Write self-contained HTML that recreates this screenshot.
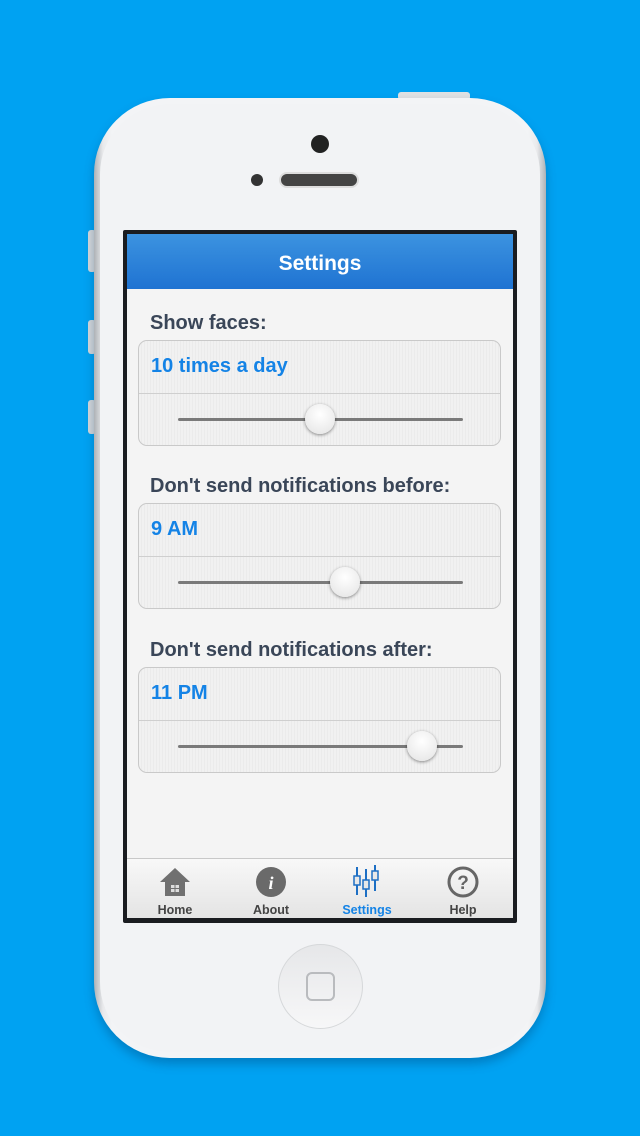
<!DOCTYPE html>
<html><head><style>
*{margin:0;padding:0;box-sizing:border-box}
body{width:640px;height:1136px;background:#00a2f2;position:relative;overflow:hidden;font-family:"Liberation Sans",Arial,sans-serif}
.abs{position:absolute}
.phone{left:94px;top:98px;width:452px;height:960px;border-radius:76px;background:linear-gradient(90deg,#aeb2b6,#e9eaec 2%,#f3f4f6 4%,#f3f4f6 96%,#e9eaec 98%,#aeb2b6);box-shadow:0 6px 10px rgba(0,60,110,.35)}
.inner{left:100px;top:104px;width:440px;height:948px;border-radius:70px;background:#f2f3f5}
.screen{left:123px;top:230px;width:394px;height:693px;background:#1a1c20;border-radius:2px}
.nav{left:127px;top:234px;width:386px;height:55px;background:linear-gradient(180deg,#3c93e0,#1f73d2);color:#fff;font-weight:bold;font-size:21px;text-align:center;line-height:60px}
.content{left:127px;top:289px;width:386px;height:569px;background:#f4f4f4}
.lbl{left:150px;font-size:20px;font-weight:bold;color:#3a4658}
.box{left:138px;width:363px;height:106px;border:1px solid #c9c9c9;border-radius:9px;background:repeating-linear-gradient(90deg,#f1f1f1 0 2px,#ebebeb 2px 3px)}
.box .div{position:absolute;left:0;right:0;top:52px;border-top:1px solid #cfcfcf}
.box .val{position:absolute;left:12px;top:14px;font-size:20px;font-weight:bold;color:#1483e6}
.box .trk{position:absolute;left:39px;width:285px;top:77px;height:3px;background:#7a7a7a;border-radius:2px}
.box .th{position:absolute;top:63px;width:30px;height:30px;border-radius:50%;background:radial-gradient(circle at 50% 35%,#fff,#e3e3e3);box-shadow:0 1px 3px rgba(0,0,0,.45)}
.tab{left:127px;top:858px;width:386px;height:60px;background:linear-gradient(180deg,#f8f8f8,#e4e4e4);border-top:1px solid #c8c8c8}
.t{position:absolute;top:44px;width:96px;text-align:center;font-size:12.5px;font-weight:bold;color:#444}
</style></head><body>
<div class="abs" style="left:398px;top:92px;width:72px;height:8px;background:#dfe1e3;border-radius:3px"></div>
<div class="abs" style="left:88px;top:230px;width:8px;height:42px;background:#d6d8da;border-radius:3px"></div>
<div class="abs" style="left:88px;top:320px;width:8px;height:34px;background:#d6d8da;border-radius:3px"></div>
<div class="abs" style="left:88px;top:400px;width:8px;height:34px;background:#d6d8da;border-radius:3px"></div>
<div class="abs phone"></div>
<div class="abs inner"></div>
<div class="abs" style="left:311px;top:135px;width:18px;height:18px;border-radius:50%;background:#222"></div>
<div class="abs" style="left:251px;top:174px;width:12px;height:12px;border-radius:50%;background:#333"></div>
<div class="abs" style="left:279px;top:172px;width:80px;height:16px;border-radius:8px;background:#444;border:2px solid #ddd"></div>
<div class="abs screen"></div>
<div class="abs nav">Settings</div>
<div class="abs content"></div>
<div class="abs lbl" style="top:312px">Show faces:</div>
<div class="abs box" style="top:340px"><div class="val">10 times a day</div><div class="div"></div><div class="trk"></div><div class="th" style="left:166px"></div></div>
<div class="abs lbl" style="top:475px">Don't send notifications before:</div>
<div class="abs box" style="top:503px"><div class="val">9 AM</div><div class="div"></div><div class="trk"></div><div class="th" style="left:191px"></div></div>
<div class="abs lbl" style="top:639px">Don't send notifications after:</div>
<div class="abs box" style="top:667px"><div class="val">11 PM</div><div class="div"></div><div class="trk"></div><div class="th" style="left:268px"></div></div>
<div class="abs tab">
<svg style="position:absolute;left:32px;top:8px" width="32" height="30"><path d="M16 1L1 15h5v14h20V15h5z" fill="#707070"/><rect x="12" y="18" width="8" height="7" fill="#ddd"/><path d="M16 18v7M12 21.5h8" stroke="#707070"/></svg>
<svg style="position:absolute;left:128px;top:7px" width="32" height="32"><circle cx="16" cy="16" r="15" fill="#6a6a6a"/><text x="16" y="23" font-family="Liberation Serif" font-style="italic" font-weight="bold" font-size="18" fill="#fff" text-anchor="middle">i</text></svg>
<svg style="position:absolute;left:225px;top:6px" width="32" height="32" stroke="#1d6fc4" stroke-width="2" fill="#e8e8e8"><path d="M5 2v28M14 4v28M23 0v26"/><rect x="2" y="11" width="6" height="9" stroke-width="1.5"/><rect x="11" y="15" width="6" height="9" stroke-width="1.5"/><rect x="20" y="6" width="6" height="9" stroke-width="1.5"/></svg>
<svg style="position:absolute;left:320px;top:7px" width="32" height="32"><circle cx="16" cy="16" r="14" fill="none" stroke="#666" stroke-width="3"/><text x="16" y="23" font-family="Liberation Sans" font-weight="bold" font-size="19" fill="#666" text-anchor="middle">?</text></svg>
<div class="t" style="left:0">Home</div><div class="t" style="left:96px">About</div><div class="t" style="left:192px;color:#1483e6">Settings</div><div class="t" style="left:288px">Help</div>
</div>
<div class="abs" style="left:278px;top:944px;width:85px;height:85px;border-radius:50%;background:linear-gradient(180deg,#e6e7e9,#f7f7f8);border:1px solid #d6d8da"></div>
<div class="abs" style="left:306px;top:972px;width:29px;height:29px;border-radius:6px;border:2px solid #b9bbbe"></div>
</body></html>
